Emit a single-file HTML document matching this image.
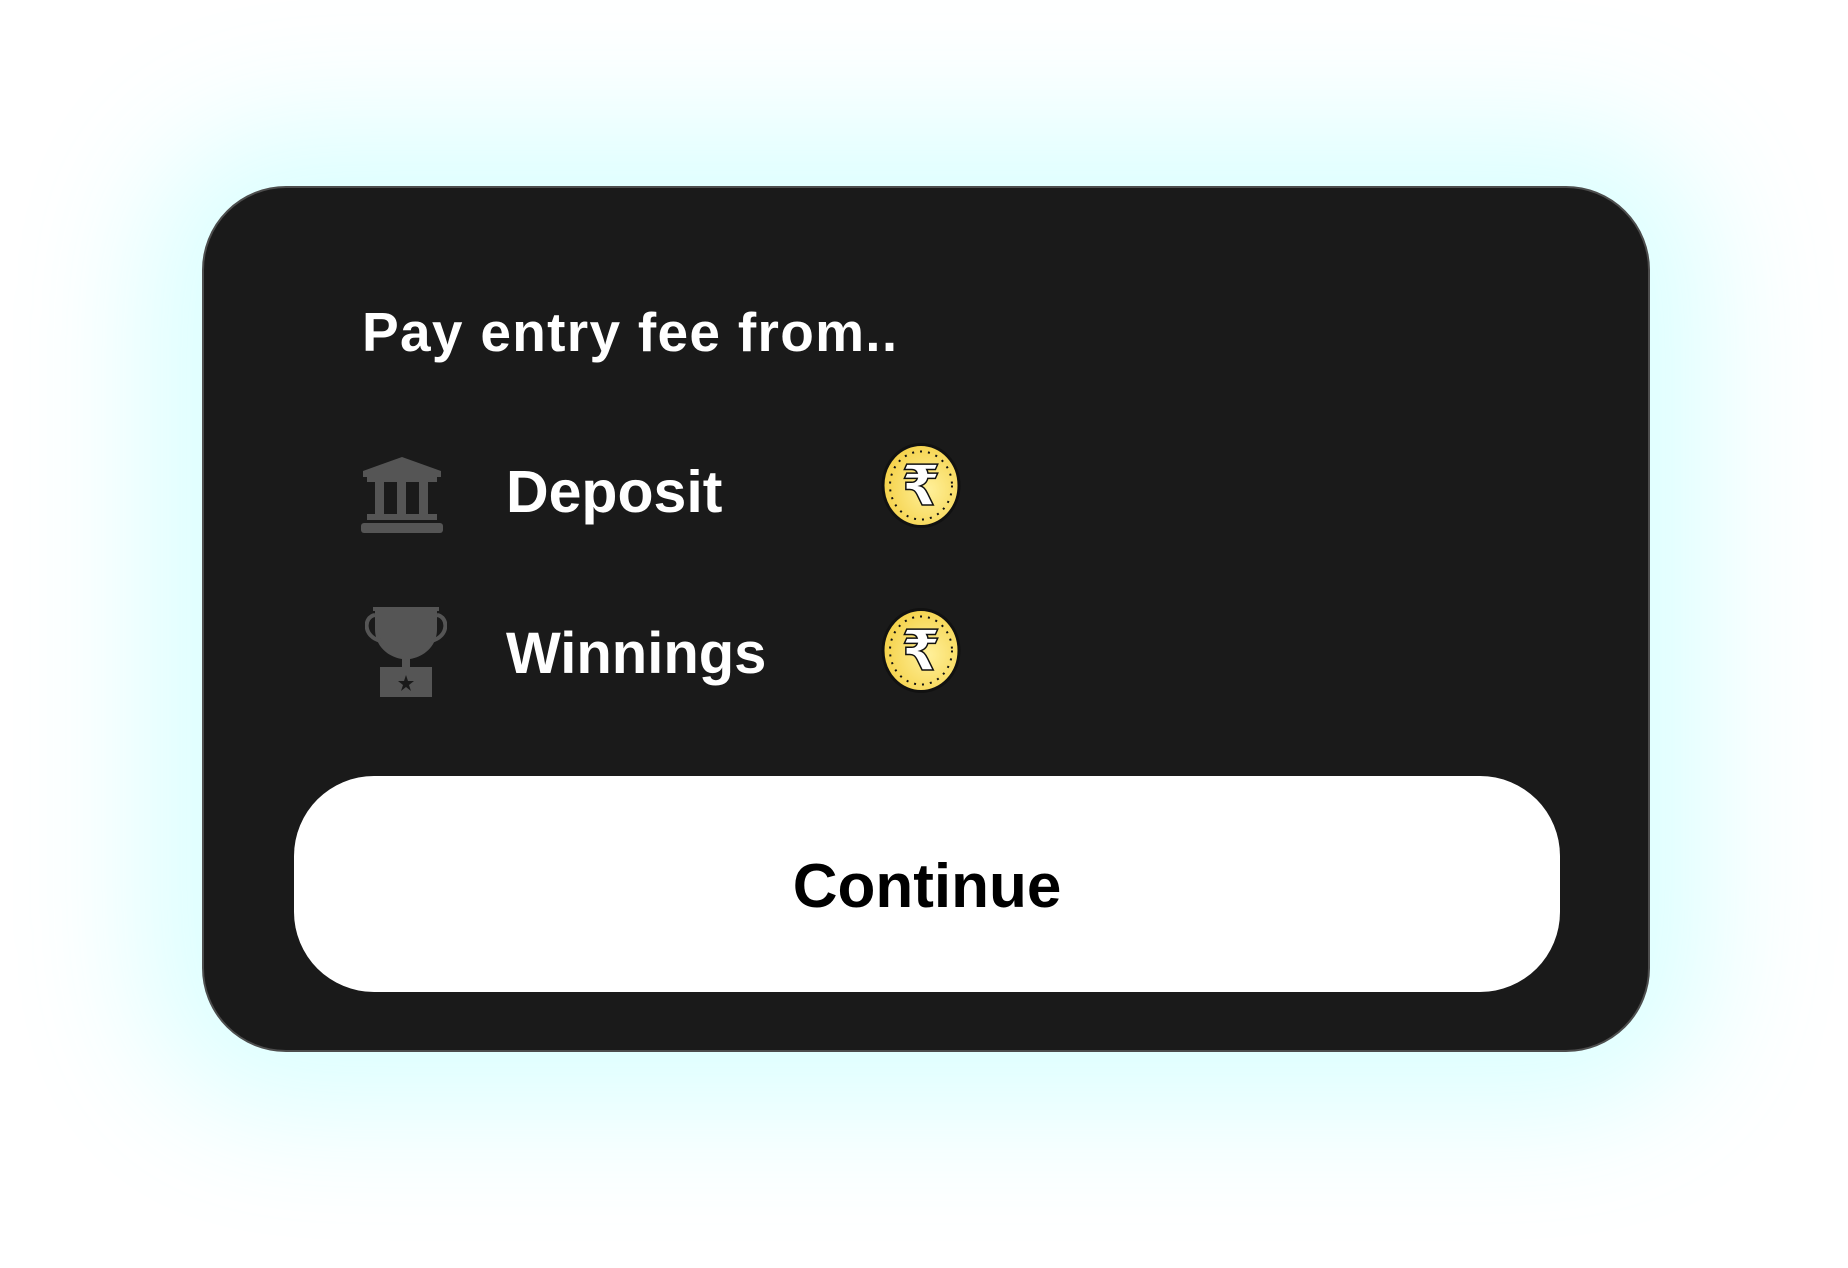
<!DOCTYPE html>
<html><head><meta charset="utf-8"><style>
html,body{margin:0;padding:0;width:1848px;height:1268px;background:#fff;overflow:hidden;font-family:"Liberation Sans",sans-serif;}
.card{position:absolute;left:202px;top:186px;width:1444px;height:862px;background:#1a1a1a;border:2px solid #4d4d4d;border-radius:84px;box-shadow:0 0 140px 60px rgba(215,255,255,0.9);}
.t{position:absolute;color:#fff;font-weight:bold;white-space:nowrap;}
.btn{position:absolute;left:294px;top:776px;width:1266px;height:216px;background:#fff;border-radius:80px;}
</style></head><body>
<div class="card"></div>
<div class="t" style="left:362px;top:300px;font-size:55px;letter-spacing:1.3px;">Pay entry fee from..</div>
<svg style="position:absolute;left:361px;top:457px" width="82" height="76" viewBox="0 0 82 76">
<g fill="#555"><polygon points="41,0 80,14 80,20 2,20 2,14"/><rect x="6" y="20" width="70" height="5"/><rect x="14" y="25" width="9" height="32"/><rect x="36" y="25" width="9" height="32"/><rect x="58" y="25" width="9" height="32"/><rect x="6" y="57" width="70" height="6"/><rect x="0" y="66" width="82" height="10" rx="3"/></g></svg>
<div class="t" style="left:506px;top:458px;font-size:59px;">Deposit</div>
<svg style="position:absolute;left:365px;top:607px" width="82" height="90" viewBox="0 0 82 90">
<g fill="#555"><rect x="8" y="0" width="66" height="4"/><path d="M10 4 H72 V22 C72 40 58 50 45 52 V60 H52 V66 H30 V60 H37 V52 C24 50 10 40 10 22 Z"/><path d="M10 8 C-2 10 -2 30 16 34" fill="none" stroke="#555" stroke-width="4"/><path d="M72 8 C84 10 84 30 66 34" fill="none" stroke="#555" stroke-width="4"/><rect x="15" y="60" width="52" height="30"/></g>
<polygon fill="#1a1a1a" points="41,68 43,74 49,74 44,78 46,84 41,80 36,84 38,78 33,74 39,74"/></svg>
<div class="t" style="left:506px;top:620px;font-size:58px;">Winnings</div>
<svg style="position:absolute;left:881px;top:443px" width="80" height="85" viewBox="0 0 80 85"><defs><radialGradient id="g" cx="60%" cy="55%" r="60%"><stop offset="0" stop-color="#fff09a"/><stop offset="1" stop-color="#f5d24a"/></radialGradient></defs>
<ellipse cx="40" cy="42.5" rx="38" ry="41" fill="url(#g)" stroke="#111" stroke-width="3"/><ellipse cx="40" cy="42.5" rx="31" ry="34" fill="none" stroke="#111" stroke-width="2" stroke-dasharray="2 6"/>
<text x="40" y="62" text-anchor="middle" font-size="56" font-weight="bold" fill="#fff" stroke="#111" stroke-width="1.5" font-family="DejaVu Sans,sans-serif">₹</text></svg>
<svg style="position:absolute;left:881px;top:608px" width="80" height="85" viewBox="0 0 80 85">
<ellipse cx="40" cy="42.5" rx="38" ry="41" fill="url(#g)" stroke="#111" stroke-width="3"/><ellipse cx="40" cy="42.5" rx="31" ry="34" fill="none" stroke="#111" stroke-width="2" stroke-dasharray="2 6"/>
<text x="40" y="62" text-anchor="middle" font-size="56" font-weight="bold" fill="#fff" stroke="#111" stroke-width="1.5" font-family="DejaVu Sans,sans-serif">₹</text></svg>
<div class="btn"></div>
<div class="t" style="left:294px;width:1266px;text-align:center;top:851px;font-size:62px;color:#000;">Continue</div>
</body></html>
